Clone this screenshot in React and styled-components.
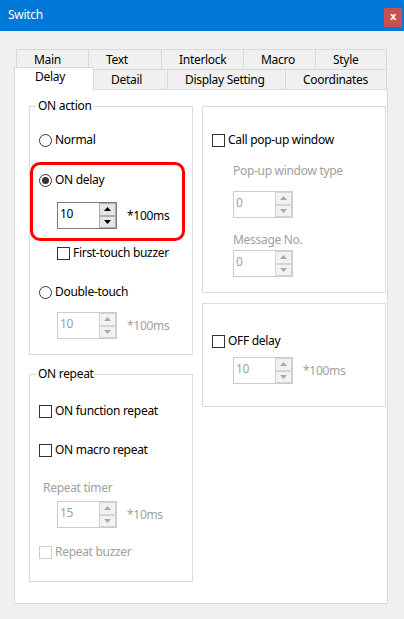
import React from "react";
import styled, { createGlobalStyle } from "styled-components";

const GlobalStyle = createGlobalStyle`
  html, body {
    margin: 0;
    padding: 0;
    background: #f0f0f0;
  }
  body {
    font-family: "Noto Sans", "Liberation Sans", sans-serif;
    font-size: 12px;
    letter-spacing: -0.3px;
    color: #000;
  }
  * {
    box-sizing: border-box;
  }
`;

const BACK_TABS = [
  { label: "Main", w: 73 },
  { label: "Text", w: 73 },
  { label: "Interlock", w: 82 },
  { label: "Macro", w: 72 },
  { label: "Style", w: 71 },
];

const FRONT_TABS = [
  { label: "Delay", w: 80, active: true },
  { label: "Detail", w: 74 },
  { label: "Display Setting", w: 118 },
  { label: "Coordinates", w: 101 },
];

const ArrowIcon = ({ down, disabled }) => (
  <svg width="7" height="4" viewBox="0 0 7 4">
    <polygon
      points={down ? "0,0 7,0 3.5,4" : "3.5,0 7,4 0,4"}
      fill={disabled ? "#a8a8a8" : "#000"}
    />
  </svg>
);

const Spin = ({ value, unit, disabled, mt, ml }) => (
  <SpinRow $mt={mt} $ml={ml}>
    <SpinBox $disabled={disabled}>
      <SpinValue $disabled={disabled}>{value}</SpinValue>
      <SpinButtons>
        <SpinButton $disabled={disabled}>
          <ArrowIcon disabled={disabled} />
        </SpinButton>
        <SpinButton $disabled={disabled}>
          <ArrowIcon down disabled={disabled} />
        </SpinButton>
      </SpinButtons>
    </SpinBox>
    {unit && <Unit $disabled={disabled}>{unit}</Unit>}
  </SpinRow>
);

const RadioOption = ({ label, checked, mt, ml }) => (
  <OptionRow $mt={mt} $ml={ml}>
    <Radio $checked={checked} />
    <OptionLabel>{label}</OptionLabel>
  </OptionRow>
);

const CheckOption = ({ label, disabled, mt, ml }) => (
  <OptionRow $mt={mt} $ml={ml}>
    <Checkbox $disabled={disabled} />
    <OptionLabel $disabled={disabled}>{label}</OptionLabel>
  </OptionRow>
);

export default function App() {
  return (
    <>
      <GlobalStyle />
      <Window>
        <TitleBar>
          <TitleText>Switch</TitleText>
          <CloseButton>x</CloseButton>
        </TitleBar>

        <Body>
          <TabStrip>
            <BackRow>
              {BACK_TABS.map((t, i) => (
                <Tab key={t.label} $w={t.w} $first={i === 0}>
                  {t.label}
                </Tab>
              ))}
            </BackRow>
            <FrontRow>
              {FRONT_TABS.map((t) => (
                <Tab key={t.label} $w={t.w} $active={t.active}>
                  {t.label}
                </Tab>
              ))}
            </FrontRow>
          </TabStrip>

          <Panel>
            <Columns>
              <LeftColumn>
                <GroupBox $pb={15}>
                  <Legend>ON action</Legend>
                  <RadioOption label="Normal" mt={16} ml={9} />
                  <Highlight>
                    <RadioOption label="ON delay" checked />
                    <Spin value="10" unit="*100ms" mt={12} ml={18} />
                  </Highlight>
                  <CheckOption label="First-touch buzzer" mt={2} ml={27} />
                  <RadioOption label="Double-touch" mt={19} ml={9} />
                  <Spin value="10" unit="*100ms" disabled mt={10} ml={27} />
                </GroupBox>

                <GroupBox $pb={19}>
                  <Legend>ON repeat</Legend>
                  <CheckOption label="ON function repeat" mt={19} ml={9} />
                  <CheckOption label="ON macro repeat" mt={19} ml={9} />
                  <Caption $mt={20} $ml={13}>
                    Repeat timer
                  </Caption>
                  <Spin value="15" unit="*10ms" disabled mt={5} ml={27} />
                  <CheckOption label="Repeat buzzer" disabled mt={14} ml={9} />
                </GroupBox>
              </LeftColumn>

              <RightColumn>
                <Box $pb={15}>
                  <CheckOption label="Call pop-up window" mt={23} ml={9} />
                  <Caption $mt={13} $ml={30}>
                    Pop-up window type
                  </Caption>
                  <Spin value="0" disabled mt={12} ml={30} />
                  <Caption $mt={14} $ml={30}>
                    Message No.
                  </Caption>
                  <Spin value="0" disabled mt={2} ml={30} />
                </Box>

                <Box $pb={22}>
                  <CheckOption label="OFF delay" mt={27} ml={9} />
                  <Spin value="10" unit="*100ms" disabled mt={6} ml={30} />
                </Box>
              </RightColumn>
            </Columns>
          </Panel>
        </Body>
      </Window>
    </>
  );
}

const Window = styled.div`
  width: 404px;
  height: 619px;
  display: flex;
  flex-direction: column;
  overflow: hidden;
  background: #f0f0f0;
`;

const TitleBar = styled.div`
  height: 31px;
  flex: 0 0 auto;
  display: flex;
  align-items: flex-start;
  background: #0078d7;
  color: #fff;
`;

const TitleText = styled.div`
  padding-left: 8px;
  line-height: 30px;
  font-size: 12px;
`;

const CloseButton = styled.div`
  margin: 8px 2px 0 auto;
  width: 18px;
  height: 19px;
  display: flex;
  align-items: center;
  justify-content: center;
  background: #c75050;
  color: #fff;
  font-family: "DejaVu Sans", sans-serif;
  font-size: 10px;
  font-weight: bold;
  padding-bottom: 2px;
`;

const Body = styled.div`
  padding: 18px 0 0 14px;
`;

const TabStrip = styled.div`
  display: flex;
  flex-direction: column;
`;

const BackRow = styled.div`
  display: flex;
  margin-left: 2px;
`;

const FrontRow = styled.div`
  display: flex;
  align-items: flex-end;
  margin-top: -2px;
`;

const Tab = styled.div`
  width: ${(p) => p.$w}px;
  height: ${(p) => (p.$active ? 23 : 20)}px;
  margin-bottom: ${(p) => (p.$active ? -1 : 0)}px;
  padding-left: ${(p) => (p.$active ? 20 : 17)}px;
  line-height: ${(p) => (p.$active ? 18 : 20)}px;
  border-top: 1px solid #d9d9d9;
  border-right: 1px solid #d9d9d9;
  border-left: ${(p) => (p.$first || p.$active ? "1px solid #d9d9d9" : "none")};
  background: ${(p) => (p.$active ? "#fff" : "#f0f0f0")};
  position: relative;
  z-index: ${(p) => (p.$active ? 1 : 0)};
  white-space: nowrap;
`;

const Panel = styled.div`
  width: 374px;
  height: 515px;
  background: #fff;
  border: 1px solid #d9d9d9;
  padding: 8px 0 0 14px;
`;

const Columns = styled.div`
  display: flex;
  align-items: flex-start;
  gap: 9px;
`;

const LeftColumn = styled.div`
  width: 164px;
  display: flex;
  flex-direction: column;
  gap: 11px;
`;

const RightColumn = styled.div`
  width: 184px;
  padding-top: 8px;
  display: flex;
  flex-direction: column;
  gap: 10px;
`;

const GroupBox = styled.fieldset`
  margin: 0;
  padding: 0 0 ${(p) => p.$pb}px 0;
  min-width: 0;
  border: 1px solid #dcdcdc;
  display: flex;
  flex-direction: column;
  align-items: flex-start;
`;

const Legend = styled.legend`
  margin-left: 7px;
  padding: 0 1px;
  line-height: 16px;
  font-size: 12px;
`;

const Box = styled.div`
  border: 1px solid #dcdcdc;
  padding-bottom: ${(p) => p.$pb}px;
  display: flex;
  flex-direction: column;
  align-items: flex-start;
`;

const Highlight = styled.div`
  margin: 12px 0 0 0;
  width: 155px;
  border: 3px solid #ff0000;
  border-radius: 10px;
  padding: 5px 0 9px 6px;
  display: flex;
  flex-direction: column;
  align-items: flex-start;
`;

const OptionRow = styled.div`
  height: 20px;
  display: flex;
  align-items: center;
  gap: 3px;
  margin-top: ${(p) => p.$mt || 0}px;
  margin-left: ${(p) => p.$ml || 0}px;
  white-space: nowrap;
`;

const Radio = styled.span`
  width: 13px;
  height: 13px;
  flex: 0 0 auto;
  border: 1px solid #333;
  border-radius: 50%;
  background: #fff;
  display: flex;
  align-items: center;
  justify-content: center;

  &::after {
    content: "";
    display: ${(p) => (p.$checked ? "block" : "none")};
    width: 7px;
    height: 7px;
    border-radius: 50%;
    background: #333;
  }
`;

const Checkbox = styled.span`
  width: 13px;
  height: 13px;
  flex: 0 0 auto;
  border: 1px solid ${(p) => (p.$disabled ? "#cccccc" : "#333")};
  background: #fff;
`;

const OptionLabel = styled.span`
  color: ${(p) => (p.$disabled ? "#a0a0a0" : "#000")};
  line-height: 16px;
`;

const Caption = styled.div`
  margin-top: ${(p) => p.$mt}px;
  margin-left: ${(p) => p.$ml}px;
  line-height: 16px;
  color: #a0a0a0;
  white-space: nowrap;
`;

const SpinRow = styled.div`
  display: flex;
  align-items: center;
  gap: 10px;
  margin-top: ${(p) => p.$mt || 0}px;
  margin-left: ${(p) => p.$ml || 0}px;
`;

const SpinBox = styled.div`
  width: 60px;
  height: 27px;
  display: flex;
  border: 1px solid ${(p) => (p.$disabled ? "#cccccc" : "#7a7a7a")};
  background: #fff;
`;

const SpinValue = styled.div`
  flex: 1;
  padding: 3px 0 0 2px;
  line-height: 16px;
  color: ${(p) => (p.$disabled ? "#a0a0a0" : "#000")};
`;

const SpinButtons = styled.div`
  width: 17px;
  display: flex;
  flex-direction: column;
`;

const SpinButton = styled.div`
  flex: 1;
  display: flex;
  align-items: center;
  justify-content: center;
  border: 1px solid ${(p) => (p.$disabled ? "#d4d4d4" : "#adadad")};
  background: ${(p) => (p.$disabled ? "#f2f2f2" : "#e5e5e5")};
`;

const Unit = styled.span`
  color: ${(p) => (p.$disabled ? "#a0a0a0" : "#000")};
  white-space: nowrap;
`;
